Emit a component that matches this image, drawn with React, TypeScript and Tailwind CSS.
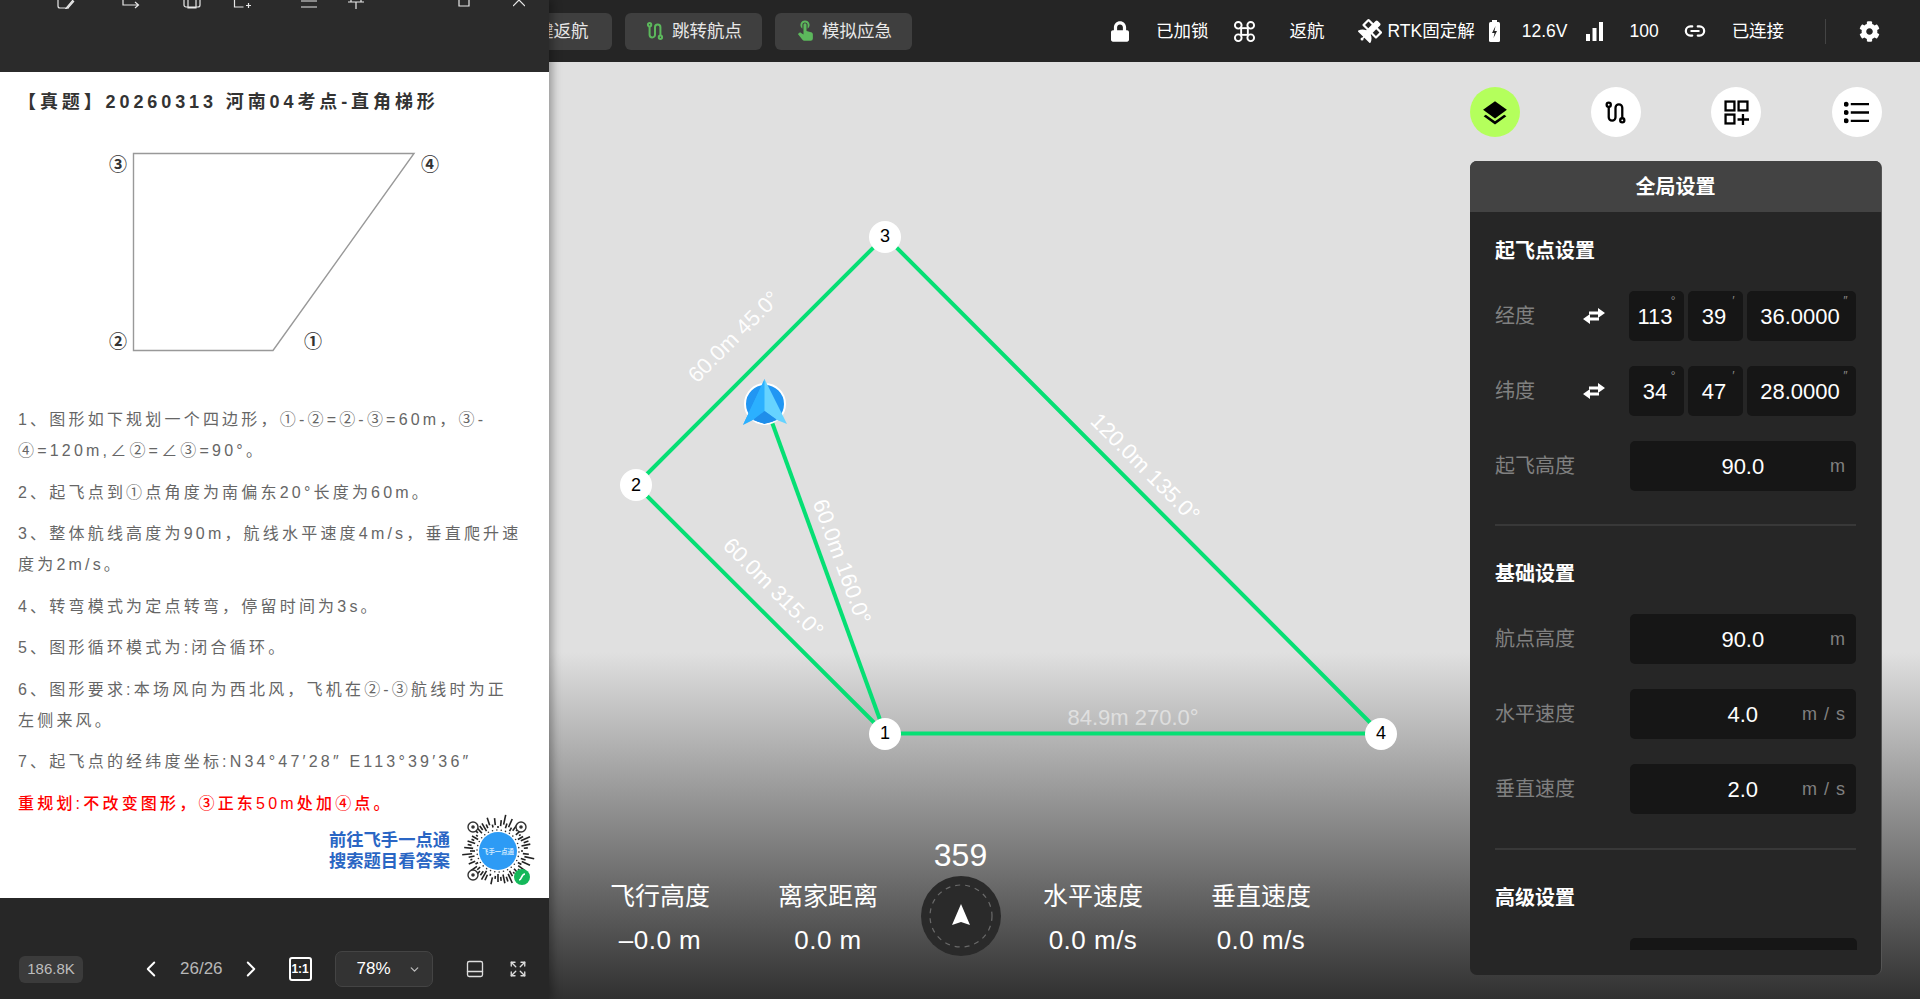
import React from "react";
import { FaLock, FaCog, FaSatellite } from "react-icons/fa";
import { ChevronLeft, ChevronRight, ChevronDown, Link2, Expand, PanelBottom } from "lucide-react";

const RouteIcon = ({ className = "", sw = 2.2 }: { className?: string; sw?: number }) => (
  <svg viewBox="0 0 24 24" fill="none" stroke="currentColor" strokeWidth={sw} className={className}>
    <circle cx="5.5" cy="4.5" r="2" />
    <circle cx="18.5" cy="19.5" r="2" />
    <path d="M5.5 6.5V16.5a3.25 3.25 0 0 0 6.5 0V7.5a3.25 3.25 0 0 1 6.5 0V17.5" />
  </svg>
);

const HandIcon = ({ className = "" }: { className?: string }) => (
  <svg viewBox="0 0 24 28" className={className} fill="currentColor">
    <path fillRule="evenodd" d="M12 0a6 6 0 0 1 3.5 10.9V6a3.5 3.5 0 0 0-7 0v4.9A6 6 0 0 1 12 0z" />
    <path d="M10 5.5a2 2 0 0 1 4 0V14l6 1.6c1.6.4 2.5 1.5 2.5 3V24a3 3 0 0 1-3 3H11a3 3 0 0 1-2.4-1.2L2.5 18l1.7-1.5c.8-.6 1.8-.6 2.6 0l3.2 2z" />
  </svg>
);

const DroneIcon = ({ className = "" }: { className?: string }) => (
  <svg viewBox="0 0 24 24" fill="none" stroke="currentColor" strokeWidth="2" className={className}>
    <circle cx="5.5" cy="5.5" r="3.5" />
    <circle cx="18.5" cy="5.5" r="3.5" />
    <circle cx="5.5" cy="18.5" r="3.5" />
    <circle cx="18.5" cy="18.5" r="3.5" />
    <rect x="8.5" y="8.5" width="7" height="7" />
  </svg>
);

const SwapIcon = () => (
  <svg viewBox="0 0 24 18" className="w-[24px] h-[18px] text-white" fill="currentColor">
    <path d="M16 1l7 5-7 5V7.6H7V4.4h9zM8 7l-7 5 7 5v-3.4h9v-3.2H8z" />
  </svg>
);

const Round = ({ active, children }: { active?: boolean; children: React.ReactNode }) => (
  <div className={`w-[50px] h-[50px] rounded-full flex items-center justify-center text-black ${active ? "bg-[#b4ff5c]" : "bg-white"}`}>{children}</div>
);

const Dms = ({ v, w, mark }: { v: string; w: string; mark: string }) => (
  <div className={`relative h-[50px] rounded-[5px] bg-[#161616] flex items-center justify-center text-[22px] text-white pr-[3px] ${w}`}>
    {v}
    <span className="absolute right-[9px] top-[2px] text-[12px] leading-[16px] italic text-[#8a8a8a]">{mark}</span>
  </div>
);

const Geo = ({ label, a, b, c }: { label: string; a: string; b: string; c: string }) => (
  <div className="flex items-center h-[50px] mb-[25px] last:mb-0">
    <div className="w-[135px] flex items-center justify-between pr-[23px] text-[20px] text-[#808080]">
      <span>{label}</span>
      <SwapIcon />
    </div>
    <div className="flex gap-[4px]">
      <Dms v={a} w="w-[55px]" mark="°" />
      <Dms v={b} w="w-[55px]" mark="′" />
      <Dms v={c} w="w-[109px]" mark="″" />
    </div>
  </div>
);

const Field = ({ label, v, unit }: { label: string; v: string; unit: string }) => (
  <div className="flex items-center h-[50px] mb-[25px] last:mb-0">
    <div className="w-[135px] text-[20px] text-[#808080]">{label}</div>
    <div className="relative w-[227px] h-[50px] rounded-[5px] bg-[#161616] flex items-center justify-center text-[22px] text-white">
      {v}
      <span className="absolute right-[10px] text-[18px] text-[#808080] tracking-[1px]">{unit}</span>
    </div>
  </div>
);

const SectionTitle = ({ children }: { children: React.ReactNode }) => (
  <div className="h-[32px] leading-[32px] text-[20px] font-bold text-white mb-[24px]">{children}</div>
);

const Stat = ({ t, v }: { t: string; v: string }) => (
  <div className="w-[168px] flex flex-col items-center text-white">
    <div className="h-[40px] leading-[40px] text-[25px]">{t}</div>
    <div className="mt-[8px] h-[32px] leading-[32px] text-[26px] tracking-[0.5px]">{v}</div>
  </div>
);

const Node = ({ n, x, y }: { n: string; x: number; y: number }) => (
  <div
    className="absolute w-[32px] h-[32px] -ml-[16px] -mt-[16px] rounded-full bg-white flex items-center justify-center text-[18px] text-black"
    style={{ left: x, top: y }}
  >
    {n}
  </div>
);

const QR = () => {
  const rays = [];
  for (let i = 0; i < 60; i++) {
    const a = (i / 60) * Math.PI * 2;
    const r1 = 23 + ((i * 7) % 5);
    const r2 = r1 + 2 + ((i * 13) % 9);
    rays.push(
      <line key={i} x1={39 + r1 * Math.cos(a)} y1={39 + r1 * Math.sin(a)} x2={39 + Math.min(r2, 38) * Math.cos(a)} y2={39 + Math.min(r2, 38) * Math.sin(a)} stroke="#222" strokeWidth="1.6" />
    );
    if (i % 2 === 0) {
      const r3 = 21 + ((i * 3) % 3);
      rays.push(<circle key={"c" + i} cx={39 + r3 * Math.cos(a + 0.05)} cy={39 + r3 * Math.sin(a + 0.05)} r="0.8" fill="#333" />);
    }
  }
  return (
    <svg viewBox="0 0 78 78" className="w-[78px] h-[78px]">
      {rays}
      {[[14, 15], [62, 15], [14, 63]].map(([x, y]) => (
        <g key={x + "-" + y}>
          <circle cx={x} cy={y} r="5" fill="#fff" stroke="#333" strokeWidth="1.4" />
          <circle cx={x} cy={y} r="1.8" fill="#333" />
        </g>
      ))}
      <circle cx="39" cy="39" r="19" fill="#2d9bf5" />
      <text x="39" y="41.5" textAnchor="middle" fontSize="6.4" fill="#cfe9ff" fontWeight="700">飞手一点通</text>
      <circle cx="63" cy="65" r="8" fill="#14b85a" />
      <path d="M60 68c3 0 2-6 6-6" fill="none" stroke="#fff" strokeWidth="1.6" />
    </svg>
  );
};

const P = ({ children }: { children: React.ReactNode }) => <p className="mb-[10.5px]">{children}</p>;

export default function App() {
  return (
    <div className="w-[1920px] h-[999px] flex overflow-hidden bg-[#252525] font-['Liberation_Sans','Noto_Sans_CJK_SC',sans-serif]">
      {/* viewer */}
      <aside className="relative z-10 w-[549px] h-full shrink-0 flex flex-col shadow-[3px_0_9px_rgba(0,0,0,0.35)]">
        <div className="relative h-[72px] bg-[#2b2b2b] overflow-hidden text-[#e8e8e8]">
          <div className="flex items-end h-[9px]">
            <svg viewBox="0 0 18 9" className="absolute left-[57px] top-0 w-[18px] h-[9px]" fill="none" stroke="currentColor" strokeWidth="1.2"><path d="M1 0v6a2 2 0 0 0 2 2h9M16 0l-6 7-1 1.5 2-.5 6-7" /></svg>
            <svg viewBox="0 0 18 9" className="absolute left-[122px] top-0 w-[18px] h-[9px]" fill="none" stroke="currentColor" strokeWidth="1.2"><path d="M1 0v5h15M13 2l3.5 3L13 8" /></svg>
            <svg viewBox="0 0 18 9" className="absolute left-[183px] top-0 w-[18px] h-[9px]" fill="none" stroke="currentColor" strokeWidth="1.2"><path d="M1 0v5a2 2 0 0 0 2 2h12a2 2 0 0 0 2-2V0M5 0v8h8V0" /></svg>
            <svg viewBox="0 0 18 9" className="absolute left-[233px] top-0 w-[19px] h-[9px]" fill="none" stroke="currentColor" strokeWidth="1.2"><path d="M1 0v7h9M15 3v5M12.5 5.5h5" /></svg>
            <svg viewBox="0 0 16 9" className="absolute left-[301px] top-0 w-[16px] h-[9px]" fill="none" stroke="currentColor" strokeWidth="1.2"><path d="M0 1h16M0 7h16" /></svg>
            <svg viewBox="0 0 16 9" className="absolute left-[348px] top-0 w-[16px] h-[9px]" fill="none" stroke="currentColor" strokeWidth="1.2"><path d="M0 2h16M8 2v7M3 0v2M13 0v2" /></svg>
            <svg viewBox="0 0 12 7" className="absolute left-[458px] top-0 w-[12px] h-[7px]" fill="none" stroke="currentColor" strokeWidth="1.2"><path d="M1 0v6h10V0" /></svg>
            <svg viewBox="0 0 12 7" className="absolute left-[513px] top-0 w-[12px] h-[7px]" fill="none" stroke="currentColor" strokeWidth="1.2"><path d="M0 6l6-6 6 6" /></svg>
          </div>
        </div>

        <div className="flex-1 bg-white pl-[18px] pr-[26px] overflow-hidden">
          <h1 className="mt-[15px] h-[30px] leading-[30px] text-[18px] font-bold tracking-[3.9px] text-[#333] whitespace-nowrap">【真题】20260313 河南04考点-直角梯形</h1>
          <svg viewBox="0 0 549 240" className="-ml-[18px] mt-[25px] w-[549px] h-[240px] block">
            <path d="M133.5 11.5H414L273 208.5H133.5Z" fill="#fff" stroke="#999" strokeWidth="1.4" />
            <g fontSize="18" fill="#333" fontWeight="700" textAnchor="middle">
              <text x="118" y="29">③</text>
              <text x="430" y="29">④</text>
              <text x="118" y="206">②</text>
              <text x="313" y="206">①</text>
            </g>
          </svg>
          <div className="mt-[22px] text-[16px] leading-[31px] tracking-[3.2px] text-[#666]">
            <P>1、图形如下规划一个四边形，①-②=②-③=60m，③-④=120m,∠②=∠③=90°。</P>
            <P>2、起飞点到①点角度为南偏东20°长度为60m。</P>
            <P>3、整体航线高度为90m，航线水平速度4m/s，垂直爬升速度为2m/s。</P>
            <P>4、转弯模式为定点转弯，停留时间为3s。</P>
            <P>5、图形循环模式为:闭合循环。</P>
            <P>6、图形要求:本场风向为西北风，飞机在②-③航线时为正左侧来风。</P>
            <P>7、起飞点的经纬度坐标:N34°47′28″ E113°39′36″</P>
            <p className="text-[#ff0000] font-medium">重规划:不改变图形，③正东50m处加④点。</p>
          </div>
          <div className="flex justify-end items-center gap-[9px] -mr-[14px] -mt-[7px]">
            <div className="text-[17.3px] leading-[21px] font-bold text-[#2a66c4] whitespace-nowrap">
              <div>前往飞手一点通</div>
              <div>搜索题目看答案</div>
            </div>
            <QR />
          </div>
        </div>

        <div className="h-[101px] bg-[#272727] flex items-end pb-[12px] pl-[19px] text-[#c8c8c8]">
          <div className="h-[36px] flex items-center w-full">
            <span className="w-[64px] h-[27px] rounded-[6px] bg-[#3b3b3b] flex items-center justify-center text-[15px] text-[#bdbdbd]">186.8K</span>
            <ChevronLeft className="ml-[55px] w-[26px] h-[26px] text-white" strokeWidth={1.8} />
            <span className="ml-[16px] text-[17px] text-[#b8b8b8]">26/26</span>
            <ChevronRight className="ml-[15px] w-[26px] h-[26px] text-white" strokeWidth={1.8} />
            <span className="ml-[25px] w-[23px] h-[24px] rounded-[3px] border-2 border-white flex items-center justify-center text-[12px] leading-none font-bold text-white">1:1</span>
            <div className="ml-[23px] relative w-[98px] h-[36px] rounded-[7px] bg-[#333333] border border-[#444] flex items-center pl-[21px] text-[17px] text-white">
              78%
              <ChevronDown className="absolute right-[11px] w-[13px] h-[13px] text-[#bbb]" strokeWidth={2.4} />
            </div>
            <PanelBottom className="ml-[32px] w-[20px] h-[20px] text-[#ddd]" strokeWidth={1.6} />
            <Expand className="ml-[24px] w-[18px] h-[18px] text-[#ddd]" strokeWidth={1.8} />
          </div>
        </div>
      </aside>

      {/* main */}
      <main className="flex-1 min-w-0 flex flex-col">
        <header className="h-[62px] shrink-0 bg-[#252525] flex items-center text-[17.5px] text-white whitespace-nowrap">
          <div className="-ml-[74px] w-[137px] h-[37px] rounded-[6px] bg-[#3f3f3f] flex items-center justify-center text-[#e8e8e8] pr-[0px]">
            <span className="ml-[20px]">一键返航</span>
          </div>
          <div className="ml-[13px] w-[137px] h-[37px] rounded-[6px] bg-[#3f3f3f] flex items-center pl-[20px] gap-[7px] text-[#e8e8e8]">
            <RouteIcon className="w-[20px] h-[20px] text-[#5cb85c]" sw={2.4} />
            跳转航点
          </div>
          <div className="ml-[13px] w-[137px] h-[37px] rounded-[6px] bg-[#3f3f3f] flex items-center pl-[21px] gap-[8px] text-[#e8e8e8]">
            <HandIcon className="w-[18px] h-[24px] text-[#5cb85c]" />
            模拟应急
          </div>
          <FaLock className="ml-[199px] w-[18px] h-[21px]" />
          <span className="ml-[27px]">已加锁</span>
          <DroneIcon className="ml-[24px] w-[23px] h-[23px]" />
          <span className="ml-[34px]">返航</span>
          <FaSatellite className="ml-[33px] w-[24px] h-[24px]" />
          <span className="ml-[6px]">RTK固定解</span>
          <svg viewBox="0 0 11 22" className="ml-[14px] w-[11px] h-[22px]" fill="#fff">
            <rect x="3" y="0" width="5" height="3" />
            <rect x="0" y="2" width="11" height="20" rx="1.5" />
            <path d="M6.5 6L3 13h2.5L4.5 18 8 11H5.5z" fill="#252525" />
          </svg>
          <span className="ml-[22px]">12.6V</span>
          <svg viewBox="0 0 17 19" className="ml-[19px] w-[17px] h-[19px]" fill="#fff">
            <rect x="0" y="12" width="4" height="7" />
            <rect x="6.5" y="6" width="4" height="13" />
            <rect x="13" y="0" width="4" height="19" />
          </svg>
          <span className="ml-[26px]">100</span>
          <Link2 className="ml-[25px] w-[22px] h-[22px]" strokeWidth={2.4} />
          <span className="ml-[26px]">已连接</span>
          <div className="ml-[41px] w-px h-[25px] bg-[#444]" />
          <FaCog className="ml-[33px] w-[21px] h-[21px]" />
        </header>

        <div className="relative flex-1 bg-[linear-gradient(180deg,#e0e0e0_63%,#303030_100%)]">
          <svg className="absolute inset-0 w-full h-full" viewBox="0 0 1371 937">
            <g stroke="#06df74" strokeWidth="4" fill="none">
              <path d="M87 423L336 174L832 671.5H336L87 423" />
              <path d="M216 341L336 671.5" />
            </g>
            <g fill="#fff" fontSize="22" textAnchor="middle">
              <text transform="translate(190 280) rotate(-45)" opacity="0.95">60.0m 45.0°</text>
              <text transform="translate(591 411) rotate(45)">120.0m 135.0°</text>
              <text transform="translate(219 531) rotate(45)">60.0m 315.0°</text>
              <text transform="translate(286 502) rotate(70)">60.0m 160.0°</text>
              <text transform="translate(584 663)" opacity="0.5">84.9m 270.0°</text>
            </g>
          </svg>
          <Node n="3" x={336} y={174.5} />
          <Node n="2" x={87} y={423} />
          <Node n="1" x={336} y={671.5} />
          <Node n="4" x={832} y={671.5} />

          <svg viewBox="0 0 46 48" className="absolute left-[193px] top-[316px] w-[46px] h-[48px]">
            <circle cx="23" cy="26" r="20" fill="#2196f3" stroke="#fff" strokeWidth="2" />
            <path d="M23 2L23 36L8 38L1 48z" fill="#2bb0ff" transform="translate(0 -1)" />
            <path d="M22.5 1L1 47l10-5 11.5-9z" fill="#2bb0ff" />
            <path d="M22.5 1L45 46l-10-4-12.5-9z" fill="#66d3ff" />
            <path d="M11 42l11.5-9L35 42l-12.5 4z" fill="#1f8eea" />
          </svg>

          {/* bottom stats */}
          <div className="absolute left-[27px] top-[814px] flex items-start">
            <Stat t="飞行高度" v="–0.0 m" />
            <Stat t="离家距离" v="0.0 m" />
            <div className="relative w-[97px] flex justify-center">
              <span className="absolute -top-[41px] left-0 right-0 text-center text-[32px] leading-[40px] text-white">359</span>
              <svg viewBox="0 0 80 80" className="w-[80px] h-[80px]">
                <circle cx="40" cy="40" r="40" fill="#2a2a2a" />
                <circle cx="40" cy="40" r="31" fill="none" stroke="#6a6a6a" strokeWidth="1.2" strokeDasharray="5 5" />
                <path d="M40 28L49 49L40 46L31 49Z" fill="#fff" />
              </svg>
            </div>
            <Stat t="水平速度" v="0.0 m/s" />
            <Stat t="垂直速度" v="0.0 m/s" />
          </div>

          {/* right column */}
          <div className="absolute right-[38px] top-[25px] w-[412px] flex flex-col">
            <div className="flex justify-between">
              <Round active>
                <svg viewBox="0 0 24 24" className="w-[26px] h-[26px]" fill="currentColor">
                  <path d="M12 2L23 10l-11 8L1 10z" />
                  <path d="M3.5 14.5L12 20.6l8.5-6.1 2 1.5L12 23.5 1.5 16z" />
                </svg>
              </Round>
              <Round><RouteIcon className="w-[25px] h-[25px]" /></Round>
              <Round>
                <svg viewBox="0 0 24 24" className="w-[25px] h-[25px]" fill="none" stroke="currentColor" strokeWidth="2.2">
                  <rect x="1.5" y="1.5" width="8.5" height="8.5" />
                  <rect x="14" y="1.5" width="8.5" height="8.5" />
                  <rect x="1.5" y="14" width="8.5" height="8.5" />
                  <path d="M18.2 13.5V24M13 18.7H24" />
                </svg>
              </Round>
              <Round>
                <svg viewBox="0 0 24 24" className="w-[25px] h-[25px]" fill="none" stroke="currentColor" strokeWidth="2.2">
                  <path d="M6.5 4H24M6.5 12H24M6.5 20H24" />
                  <circle cx="2" cy="4" r="1.3" fill="currentColor" />
                  <circle cx="2" cy="12" r="1.3" fill="currentColor" />
                  <circle cx="2" cy="20" r="1.3" fill="currentColor" />
                </svg>
              </Round>
            </div>

            <section className="mt-[24px] h-[814px] rounded-[7px] bg-[#262626] border-r border-[#555] flex flex-col overflow-hidden">
              <div className="h-[51px] shrink-0 bg-[#434343] flex items-center justify-center text-[20px] font-bold text-white">全局设置</div>
              <div className="h-[738px] overflow-hidden px-[25px] pt-[23px]">
                <SectionTitle>起飞点设置</SectionTitle>
                <div>
                  <Geo label="经度" a="113" b="39" c="36.0000" />
                  <Geo label="纬度" a="34" b="47" c="28.0000" />
                  <Field label="起飞高度" v="90.0" unit="m" />
                </div>
                <div className="mt-[33px] mb-[32px] h-[2px] bg-[#383838]" />
                <SectionTitle>基础设置</SectionTitle>
                <div>
                  <Field label="航点高度" v="90.0" unit="m" />
                  <Field label="水平速度" v="4.0" unit="m / s" />
                  <Field label="垂直速度" v="2.0" unit="m / s" />
                </div>
                <div className="mt-[34px] mb-[32px] h-[2px] bg-[#383838]" />
                <SectionTitle>高级设置</SectionTitle>
                <div className="ml-[135px] w-[227px] h-[50px] rounded-[5px] bg-[#161616]" />
              </div>
            </section>
          </div>
        </div>
      </main>
    </div>
  );
}
